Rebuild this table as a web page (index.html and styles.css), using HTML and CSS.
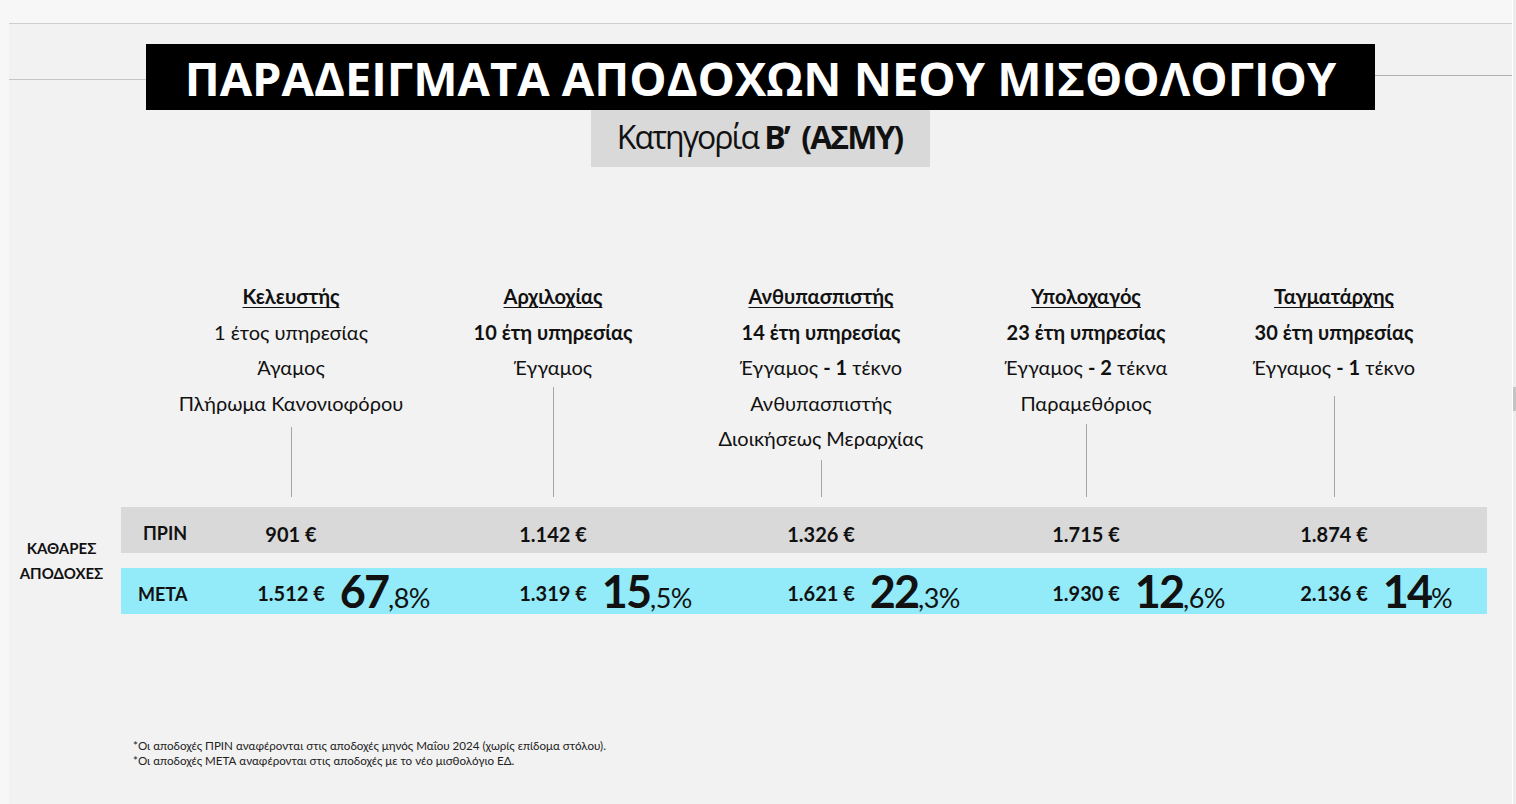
FILE: index.html
```html
<!DOCTYPE html>
<html lang="el">
<head>
<meta charset="utf-8">
<title>Παραδείγματα αποδοχών νέου μισθολογίου</title>
<link rel="stylesheet" href="styles.css">
</head>
<body>
<div class="viewport">
  <div class="slide">
    <div class="title-row">
      <div class="rule rule-left"></div>
      <h1 class="title">ΠΑΡΑΔΕΙΓΜΑΤΑ ΑΠΟΔΟΧΩΝ ΝΕΟΥ ΜΙΣΘΟΛΟΓΙΟΥ</h1>
      <div class="rule rule-right"></div>
    </div>
    <div class="subtitle-wrap">
      <div class="subtitle">Κατηγορία <b>Β’&nbsp; (ΑΣΜΥ)</b></div>
    </div>

    <div class="heads">
      <div class="head">
        <div class="rank">Κελευστής</div>
        <div>1 έτος υπηρεσίας</div>
        <div>Άγαμος</div>
        <div>Πλήρωμα Κανονιοφόρου</div>
        <div class="stem s1"></div>
      </div>
      <div class="head">
        <div class="rank">Αρχιλοχίας</div>
        <div class="b">10 έτη υπηρεσίας</div>
        <div>Έγγαμος</div>
        <div class="stem s2"></div>
      </div>
      <div class="head">
        <div class="rank">Ανθυπασπιστής</div>
        <div class="b">14 έτη υπηρεσίας</div>
        <div>Έγγαμος <b>- 1</b> τέκνο</div>
        <div>Ανθυπασπιστής</div>
        <div>Διοικήσεως Μεραρχίας</div>
        <div class="stem s3"></div>
      </div>
      <div class="head">
        <div class="rank">Υπολοχαγός</div>
        <div class="b">23 έτη υπηρεσίας</div>
        <div>Έγγαμος <b>- 2</b> τέκνα</div>
        <div>Παραμεθόριος</div>
        <div class="stem s4"></div>
      </div>
      <div class="head">
        <div class="rank">Ταγματάρχης</div>
        <div class="b">30 έτη υπηρεσίας</div>
        <div>Έγγαμος <b>- 1</b> τέκνο</div>
        <div class="stem s5"></div>
      </div>
    </div>

    <div class="pay">
      <div class="pay-label">ΚΑΘΑΡΕΣ<br>ΑΠΟΔΟΧΕΣ</div>
      <div class="rows">
        <div class="row before">
          <div class="row-name">ΠΡΙΝ</div>
          <div class="cell"><span class="money">901 €</span></div>
          <div class="cell"><span class="money">1.142 €</span></div>
          <div class="cell"><span class="money">1.326 €</span></div>
          <div class="cell"><span class="money">1.715 €</span></div>
          <div class="cell"><span class="money">1.874 €</span></div>
        </div>
        <div class="row after">
          <div class="row-name after-name">ΜΕΤΑ</div>
          <div class="cell"><span class="money">1.512 €</span><span class="pct"><b>67</b>,8%</span></div>
          <div class="cell"><span class="money">1.319 €</span><span class="pct"><b>15</b>,5%</span></div>
          <div class="cell"><span class="money">1.621 €</span><span class="pct"><b>22</b>,3%</span></div>
          <div class="cell"><span class="money">1.930 €</span><span class="pct"><b>12</b>,6%</span></div>
          <div class="cell"><span class="money">2.136 €</span><span class="pct"><b>14</b>%</span></div>
        </div>
      </div>
    </div>

    <div class="notes">
      <p>*Οι αποδοχές ΠΡΙΝ αναφέρονται στις αποδοχές μηνός Μαΐου 2024 (χωρίς επίδομα στόλου).</p>
      <p>*Οι αποδοχές ΜΕΤΑ αναφέρονται στις αποδοχές με το νέο μισθολόγιο ΕΔ.</p>
    </div>
  </div>
  <div class="edge"></div>
  <div class="scrollbar"><div class="thumb"></div></div>
</div>
</body>
</html>
```

FILE: styles.css
```css
* { box-sizing: border-box; }

html, body {
  margin: 0;
  padding: 0;
  background: #f7f7f7;
  font-family: Lato, "Open Sans", "Noto Sans", sans-serif;
  color: #111;
}

.viewport {
  display: flex;
  height: 804px;
  overflow: hidden;
  padding-left: 9px;
}

.slide {
  width: 1503px;
  margin-top: 23px;
  height: 781px;
  background: #f2f2f2;
  border-top: 1px solid #cfcfcf;
}

.edge {
  width: 1px;
  background: #ffffff;
}

.scrollbar {
  width: 3px;
  background: #ededed;
  padding-top: 387px;
}

.thumb {
  height: 24px;
  background: #c4c4c4;
}

/* Title */
.title-row {
  display: flex;
  margin-top: 20px;
  align-items: flex-start;
}

.rule {
  height: 1px;
}

.rule-left {
  width: 137px;
  margin-top: 35px;
  background: #c6c6c6;
}

.rule-right {
  flex: 1;
  margin-top: 31px;
  background: #b0b0b0;
}

.title {
  margin: 0;
  width: 1229px;
  height: 66px;
  background: #000;
  color: #fff;
  font-family: "Open Sans", sans-serif;
  font-weight: 700;
  font-size: 47px;
  line-height: 68px;
  text-align: center;
  white-space: nowrap;
}

.subtitle-wrap {
  display: flex;
  justify-content: center;
}

.subtitle {
  width: 339px;
  height: 57px;
  background: #d9d9d9;
  font-family: "Open Sans", sans-serif;
  font-size: 32px;
  line-height: 54px;
  letter-spacing: -2px;
  text-align: center;
  color: #111;
  padding-right: 2px;
}

.subtitle b {
  font-weight: 700;
}

/* Headers */
.heads {
  margin-top: 112px;
  margin-left: 112px;
  display: grid;
  grid-template-columns: 39px 262px 262px 274px 256px 240px;
  height: 218px;
}

.head {
  display: flex;
  flex-direction: column;
  align-items: center;
  font-size: 20px;
  line-height: 35.5px;
  white-space: nowrap;
}

.head:nth-child(1) { grid-column: 2; }
.head:nth-child(2) { grid-column: 3; }
.head:nth-child(3) { grid-column: 4; }
.head:nth-child(4) { grid-column: 5; }
.head:nth-child(5) { grid-column: 6; }

.rank {
  font-weight: 700;
  text-decoration: underline;
  text-underline-offset: 3px;
  text-decoration-thickness: 1px;
}

.b { font-weight: 700; }
.head b { font-weight: 700; }

.stem {
  flex: 1;
  width: 1px;
  background: #a6a6a6;
}

.s1 { margin-top: 6px; }
.s2 { margin-top: 1px; }
.s3 { margin-top: 3px; }
.s4 { margin-top: 3px; }
.s5 { margin-top: 10px; }

/* Pay rows */
.pay {
  display: flex;
  margin-top: 10px;
  align-items: center;
}

.pay-label {
  width: 112px;
  padding-right: 7px;
  text-align: center;
  font-weight: 700;
  font-size: 15px;
  line-height: 25px;
  color: #111;
}

.rows {
  width: 1366px;
  display: flex;
  flex-direction: column;
  gap: 15px;
}

.row {
  height: 46px;
  display: grid;
  grid-template-columns: 39px 262px 262px 274px 256px 240px;
  align-items: center;
  padding-top: 5px;
}

.before { background: #d9d9d9; }
.after { background: #93ebf9; padding-top: 0; }

.row-name {
  padding-left: 22px;
  font-weight: 700;
  font-size: 18px;
  white-space: nowrap;
}

.after-name { padding-left: 17px; margin-bottom: 4px; }

.cell {
  display: grid;
  grid-template-columns: minmax(0, 1fr) auto minmax(0, 1fr);
  align-items: center;
  white-space: nowrap;
}

.money {
  grid-column: 2;
  font-weight: 700;
  font-size: 20px;
  padding-top: 2px;
}

.after .money {
  padding-top: 0;
  margin-bottom: 6px;
}

.pct {
  grid-column: 3;
  justify-self: start;
  padding-left: 15px;
  font-size: 27px;
  letter-spacing: -0.5px;
  line-height: 46px;
  margin-bottom: 2px;
}

.pct b {
  font-size: 45px;
  font-weight: 700;
  letter-spacing: -2px;
}

/* Notes */
.notes {
  margin-top: 124px;
  margin-left: 124px;
  font-size: 11.6px;
  line-height: 15px;
  color: #222;
}

.notes p { margin: 0; }
```
